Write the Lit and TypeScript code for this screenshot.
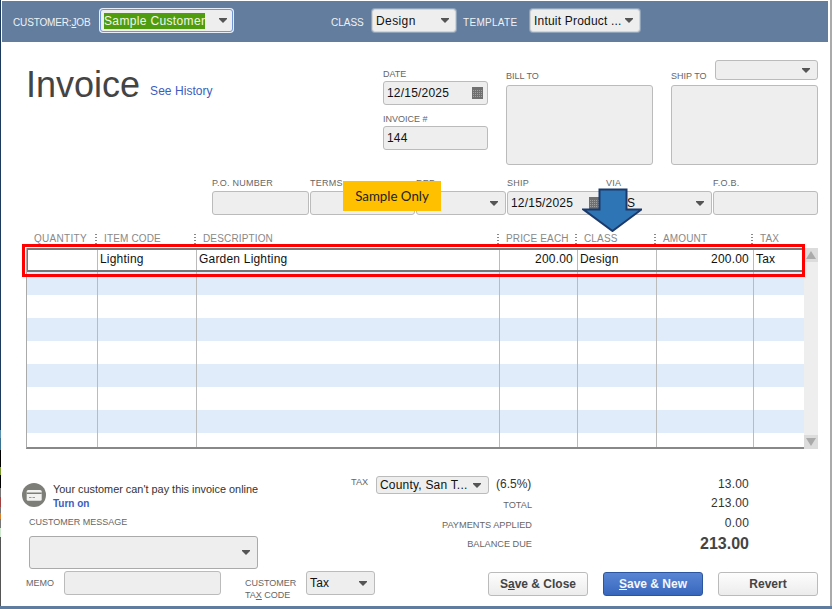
// app.ts
import { LitElement, html, css, svg } from "lit";
import { customElement } from "lit/decorators.js";

const caret = html`<svg class="caret" width="8" height="5" viewBox="0 0 8 5">
  <path d="M0 0h8v1L4 5 0 1z" fill="#555"></path>
</svg>`;

const calendar = html`<svg class="cal" width="11" height="12" viewBox="0 0 11 12">
  <rect width="11" height="12" fill="#707070"></rect>
  ${[3, 5, 7, 9].map((y) =>
    [1, 3, 5, 7, 9].map((x) => svg`<rect x="${x}" y="${y}" width="1" height="1" fill="#a0a0a0"></rect>`)
  )}
</svg>`;

const COLS = [
  ["QUANTITY", 71],
  ["ITEM CODE", 99],
  ["DESCRIPTION", 303],
  ["PRICE EACH", 78],
  ["CLASS", 79],
  ["AMOUNT", 97],
  ["TAX", 50],
] as const;

@customElement("app-root")
export class AppRoot extends LitElement {
  static styles = css`
    :host {
      display: block;
      position: relative;
      width: 832px;
      height: 609px;
      overflow: hidden;
      background: #fff;
      font-family: "Liberation Sans", Arial, sans-serif;
      font-size: 12px;
      color: #111;
    }
    .frame {
      display: flex;
      height: 606px;
    }
    .strip {
      width: 1px;
      background: linear-gradient(
        #1b3a5c 0 430px,
        #5a90b0 430px 438px,
        #3a7090 438px 450px,
        #000 450px 467px,
        #7a9a30 467px 475px,
        #000 475px 488px,
        #777 488px 497px,
        #a04040 497px 507px,
        #777 507px 513px,
        #d08030 513px 519px,
        #777 519px 528px,
        #cfe8d0 528px 537px,
        #555 537px 606px
      );
    }
    .main {
      width: 826px;
      margin: 1px 2px 0 1px;
    }
    .rightbar {
      width: 2px;
      background: #aaa;
    }
    .bottombar {
      height: 3px;
      background: #5f7d9e;
    }

    /* header band */
    .head {
      display: flex;
      align-items: center;
      height: 41px;
      padding-left: 11px;
      background: #637d9e;
      color: #eef2f6;
      font-size: 10px;
    }
    .head > span {
      margin-top: 1px;
      white-space: nowrap;
    }
    .head u {
      text-underline-offset: 1px;
    }
    .head .combo {
      height: 23px;
      margin-top: -2px;
      border: 1px solid #d4d4d4;
      box-shadow: 0 0 0 1px #8ea2ba;
      background: #eee;
      color: #111;
      font-size: 12px;
    }
    .head .combo .caret {
      margin-right: 3px;
    }
    .head .job-label {
      width: 87px;
      letter-spacing: -0.15px;
    }
    .head .customer {
      width: 133px;
      border-color: #6f94d8;
      box-shadow: 0 0 0 1px #e8eef8;
    }
    .head .customer .caret {
      margin-right: 2px;
    }
    .head .customer .hl {
      margin-left: 0;
      padding: 1px 0;
      background: #4f9d0f;
      color: #f2f7ea;
      letter-spacing: 0.35px;
    }
    .head .cls-label {
      width: 41px;
      margin-left: 98px;
    }
    .head .cls {
      width: 84px;
      letter-spacing: 0.4px;
    }
    .head .tpl-label {
      width: 67px;
      margin-left: 7px;
      letter-spacing: 0.3px;
    }
    .head .tpl {
      width: 110px;
    }

    /* shared fields */
    .combo,
    .input {
      display: flex;
      align-items: center;
      box-sizing: border-box;
      border: 1px solid #bbb;
      border-radius: 3px;
      background: #eee;
      padding: 0 3px;
      white-space: nowrap;
      letter-spacing: 0.2px;
    }
    .caret {
      margin-left: auto;
      margin-right: 4px;
      flex: none;
    }
    .cal {
      margin-left: auto;
      margin-right: 1px;
      flex: none;
    }
    .label {
      color: #666;
      font-size: 9px;
      line-height: 14px;
      white-space: nowrap;
    }

    /* title, date, bill to, ship to */
    .top {
      display: flex;
      height: 128px;
      padding-left: 24px;
    }
    .title {
      display: flex;
      align-items: flex-start;
      width: 357px;
      height: 70px;
      padding-top: 16px;
      box-sizing: border-box;
    }
    h1 {
      margin: 0;
      font-size: 36px;
      font-weight: 400;
      line-height: 54px;
      color: #444;
    }
    .title a {
      margin: 26px 0 0 10px;
      line-height: 14px;
      letter-spacing: 0.05px;
      color: #3a5dc0;
    }
    .date-col {
      width: 105px;
      padding-top: 25px;
    }
    .date-col .input {
      height: 24px;
    }
    .date-col .label + .input + .label {
      margin-top: 7px;
    }
    .addr {
      width: 147px;
      margin-left: 18px;
      padding-top: 18px;
    }
    .addr-head {
      display: flex;
      justify-content: space-between;
      height: 25px;
    }
    .addr-head .label {
      align-self: flex-end;
      line-height: 17px;
    }
    .addr-head .combo {
      width: 103px;
      height: 20px;
    }
    .box {
      height: 80px;
      box-sizing: border-box;
      border: 1px solid #bbb;
      border-radius: 3px;
      background: #eee;
    }

    /* second row of fields */
    .fields {
      display: flex;
      gap: 1px;
      margin: 6px 0 0 210px;
    }
    .fields .label {
      line-height: 15px;
      letter-spacing: 0.25px;
    }
    .fields .combo,
    .fields .input {
      height: 24px;
    }

    /* line items */
    .col-heads {
      display: flex;
      height: 14px;
      margin: 17px 0 2px 24px;
    }
    .col-head {
      box-sizing: border-box;
      padding-left: 7px;
      color: #888;
      font-size: 10px;
      line-height: 14px;
      letter-spacing: 0.15px;
      background: radial-gradient(circle, #888 0.6px, transparent 0.7px) right 0 top 1px / 2px 3px repeat-y;
      background-size: 2px 3px;
      white-space: nowrap;
    }
    .col-head:last-child {
      background: none;
    }
    .col-head:first-child {
      padding-left: 8px;
      width: 72px;
      letter-spacing: 0.3px;
    }
    .grid-wrap {
      display: flex;
      margin-left: 24px;
      height: 201px;
    }
    .grid {
      width: 778px;
      height: 201px;
      box-sizing: border-box;
      overflow: hidden;
      border-left: 1px solid #aaa;
      border-bottom: 2px solid #888;
    }
    .row {
      display: flex;
      height: 23px;
      box-sizing: border-box;
    }
    .row.blue {
      background: #e1ecfb;
    }
    .row.active {
      height: 24px;
      padding: 2px 0;
      background: #fff;
      box-shadow: inset 0 2px #777, inset 0 -2px #777, inset 1px 0 #777, inset -2px 0 #777;
    }
    .cell {
      flex: none;
      box-sizing: border-box;
      border-right: 1px solid #bbb;
      padding: 0 2px;
      line-height: 18px;
      letter-spacing: 0.2px;
      white-space: nowrap;
    }
    .cell:last-child {
      border-right: 0;
    }
    .cell.num {
      text-align: right;
      padding-right: 4px;
    }
    .scroll {
      display: flex;
      flex-direction: column;
      justify-content: space-between;
      width: 14px;
      background: #eee;
    }
    .scroll span {
      display: flex;
      align-items: center;
      justify-content: center;
      height: 14px;
      background: #dcdcdc;
    }

    /* footer */
    .foot-top {
      display: flex;
      height: 122px;
      padding-left: 20px;
    }
    .foot-left {
      width: 329px;
      padding-top: 34px;
      box-sizing: border-box;
    }
    .notice {
      display: flex;
      gap: 7px;
      color: #333;
      font-size: 10.9px;
      line-height: 13px;
    }
    .notice b {
      display: block;
      margin-top: 1px;
      color: #3a5dc0;
      font-size: 10px;
    }
    .foot-left .msg-label {
      margin: 5px 0 7px 7px;
    }
    .msg {
      width: 229px;
      height: 33px;
      margin-left: 7px;
      border-color: #aaa;
    }
    .totals {
      display: grid;
      grid-template-columns: 181px 217px;
      grid-template-rows: 20px 20px 20px 18px;
      align-content: start;
      padding-top: 26px;
    }
    .t-label {
      display: flex;
      align-items: center;
      justify-content: flex-end;
      color: #666;
      font-size: 9.2px;
    }
    .t-tax {
      justify-content: flex-start;
      align-items: flex-start;
    }
    .t-tax .tax-name {
      width: 25px;
      line-height: 14px;
    }
    .t-tax .combo {
      width: 113px;
      height: 18px;
      margin-top: 1px;
      color: #111;
      font-size: 12px;
    }
    .t-tax .rate {
      margin: 2px 0 0 7px;
      color: #333;
      font-size: 12px;
      line-height: 14px;
    }
    .t-value {
      text-align: right;
      color: #333;
      line-height: 16px;
      letter-spacing: 0.2px;
    }
    .t-value.first {
      line-height: 18px;
    }
    .t-value.due {
      color: #444;
      font-size: 16px;
      font-weight: 700;
      line-height: 18px;
      letter-spacing: 0;
    }
    .foot-bottom {
      display: flex;
      align-items: flex-start;
      padding-left: 24px;
    }
    .memo-label {
      width: 38px;
      margin-top: 5px;
    }
    .memo {
      width: 157px;
      height: 24px;
    }
    .tax-label {
      width: 61px;
      margin: 6px 0 0 24px;
      line-height: 12px;
    }
    .tax-code {
      width: 69px;
      height: 24px;
    }
    .buttons {
      display: flex;
      gap: 15px;
      margin: 1px 0 0 113px;
    }
    button {
      width: 100px;
      height: 24px;
      padding: 0;
      border: 1px solid #bbb;
      border-radius: 3px;
      background: linear-gradient(#fdfdfd, #ececec);
      color: #444;
      font: 700 12px "Liberation Sans", Arial, sans-serif;
    }
    button.primary {
      border-color: #2c55a0;
      background: linear-gradient(#5a85d4, #3767bd);
      color: #f4f7fc;
    }

    /* pasted-on annotations */
    .sample {
      position: absolute;
      left: 343px;
      top: 181px;
      width: 98px;
      height: 30px;
      background: #ffc000;
      color: #222;
      font: 13.3px/30px Lato, sans-serif;
      text-align: center;
    }
    .arrow {
      position: absolute;
      left: 582px;
      top: 188px;
    }
    .red-box {
      position: absolute;
      left: 22px;
      top: 244px;
      width: 783px;
      height: 33px;
      box-sizing: border-box;
      border: 3px solid #f00;
    }
  `;

  renderRow(cells: string[], cls: string) {
    return html`<div class="row ${cls}">
      ${COLS.map(
        ([, w], i) => html`<div class="cell ${i === 3 || i === 5 ? "num" : ""}" style="width:${w}px">${cells[i] ?? ""}</div>`
      )}
    </div>`;
  }

  render() {
    return html`
      <div class="frame">
        <div class="strip"></div>
        <div class="main">
          <div class="head">
            <span class="job-label">CUSTOMER:<u>J</u>OB</span>
            <div class="combo customer"><span class="hl">Sample Customer</span>${caret}</div>
            <span class="cls-label">CLASS</span>
            <div class="combo cls">Design${caret}</div>
            <span class="tpl-label">TEMPLATE</span>
            <div class="combo tpl">Intuit Product ...${caret}</div>
          </div>

          <div class="top">
            <div class="title">
              <h1>Invoice</h1>
              <a>See History</a>
            </div>
            <div class="date-col">
              <div class="label">DATE</div>
              <div class="input">12/15/2025${calendar}</div>
              <div class="label">INVOICE #</div>
              <div class="input">144</div>
            </div>
            <div class="addr">
              <div class="addr-head"><span class="label">BILL TO</span></div>
              <div class="box"></div>
            </div>
            <div class="addr">
              <div class="addr-head">
                <span class="label">SHIP TO</span>
                <div class="combo">${caret}</div>
              </div>
              <div class="box"></div>
            </div>
          </div>

          <div class="fields">
            <div style="width:97px"><div class="label">P.O. NUMBER</div><div class="input"></div></div>
            <div style="width:105px"><div class="label">TERMS</div><div class="combo">${caret}</div></div>
            <div style="width:90px"><div class="label">REP</div><div class="combo">${caret}</div></div>
            <div style="width:98px"><div class="label">SHIP</div><div class="input">12/15/2025${calendar}</div></div>
            <div style="width:106px"><div class="label">VIA</div><div class="combo">UPS${caret}</div></div>
            <div style="width:105px"><div class="label">F.O.B.</div><div class="input"></div></div>
          </div>

          <div class="col-heads">
            ${COLS.map(([name, w]) => html`<div class="col-head" style="width:${w}px">${name}</div>`)}
          </div>
          <div class="grid-wrap">
            <div class="grid">
              ${this.renderRow(["", "Lighting", "Garden Lighting", "200.00", "Design", "200.00", "Tax"], "active")}
              ${[0, 1, 2, 3, 4, 5, 6, 7].map((i) => this.renderRow([], i % 2 === 0 ? "blue" : ""))}
            </div>
            <div class="scroll">
              <span><svg width="10" height="8" viewBox="0 0 10 8"><path d="M5 0l5 8H0z" fill="#aaa"></path></svg></span>
              <span><svg width="10" height="8" viewBox="0 0 10 8"><path d="M5 8L0 0h10z" fill="#aaa"></path></svg></span>
            </div>
          </div>

          <div class="foot-top">
            <div class="foot-left">
              <div class="notice">
                <svg width="24" height="24" viewBox="0 0 24 24">
                  <circle cx="12" cy="12" r="12" fill="#7e7e79"></circle>
                  <rect x="4.700" y="7" width="15" height="10.700" rx="1.500" fill="#f2f2f0"></rect>
                  <rect x="4.700" y="9.500" width="15" height="1.500" fill="#7e7e79"></rect>
                  <path d="M7 14.500h2.500M10.500 14.500H13" stroke="#9a9a96"></path>
                </svg>
                <div>Your customer can't pay this invoice online<b>Turn on</b></div>
              </div>
              <div class="label msg-label">CUSTOMER MESSAGE</div>
              <div class="combo msg">${caret}</div>
            </div>
            <div class="totals">
              <div class="t-label t-tax">
                <span class="tax-name">TAX</span>
                <div class="combo">County, San T...${caret}</div>
                <span class="rate">(6.5%)</span>
              </div>
              <div class="t-value first">13.00</div>
              <div class="t-label">TOTAL</div>
              <div class="t-value">213.00</div>
              <div class="t-label">PAYMENTS APPLIED</div>
              <div class="t-value">0.00</div>
              <div class="t-label">BALANCE DUE</div>
              <div class="t-value due">213.00</div>
            </div>
          </div>

          <div class="foot-bottom">
            <span class="label memo-label">MEMO</span>
            <div class="input memo"></div>
            <span class="label tax-label">CUSTOMER<br />TA<u>X</u> CODE</span>
            <div class="combo tax-code">Tax${caret}</div>
            <div class="buttons">
              <button>S<u>a</u>ve &amp; Close</button>
              <button class="primary"><u>S</u>ave &amp; New</button>
              <button>Revert</button>
            </div>
          </div>
        </div>
        <div class="rightbar"></div>
      </div>
      <div class="bottombar"></div>

      <div class="sample">Sample Only</div>
      <svg class="arrow" width="60" height="44" viewBox="0 0 60 44">
        <path d="M17.500 1.500h27v20h15L30.500 43 1.500 21.500h16z" fill="#2e75b6" stroke="#1b3a6b" stroke-width="2"></path>
      </svg>
      <div class="red-box"></div>
    `;
  }
}
